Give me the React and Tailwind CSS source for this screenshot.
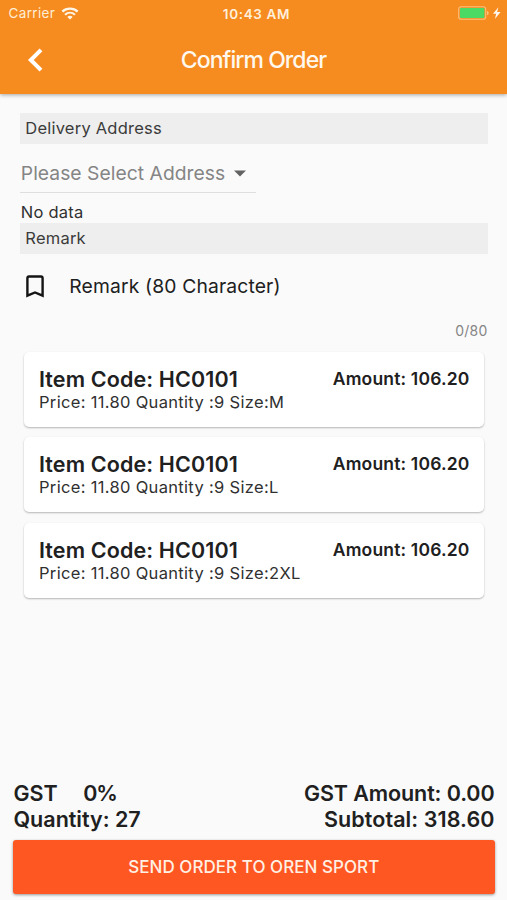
const items = [
  { code: "HC0101", price: "11.80", quantity: 9, size: "M", amount: "106.20" },
  { code: "HC0101", price: "11.80", quantity: 9, size: "L", amount: "106.20" },
  { code: "HC0101", price: "11.80", quantity: 9, size: "2XL", amount: "106.20" },
];

function StatusBar() {
  return (
    <div className="grid h-[28px] grid-cols-3 items-center text-[13.5px] leading-none">
      <div className="flex items-center pl-[8.5px] text-[#ffeed6]">
        <span className="tracking-[0.35px]">Carrier</span>
        <svg className="mb-px ml-[5.5px]" width="18" height="13" viewBox="0 0 18 13" fill="none" stroke="#fff5e6">
          <path d="M1.3 4.7C5.5.7 12.5.7 16.7 4.7" strokeWidth="2.3" />
          <path d="M4 7.7c2.9-2.6 7.1-2.6 10 0" strokeWidth="2.2" />
          <path d="M9 12.6 6.3 9.9c1.5-1.4 3.9-1.4 5.4 0z" fill="#fff5e6" stroke="none" />
        </svg>
      </div>
      <div className="pt-px pl-[6px] text-center font-semibold tracking-[0.65px] text-[#fff0dc]">10:43 AM</div>
      <div className="flex items-center justify-end pr-[6px]">
        <svg className="mb-[2px]" width="43" height="14" viewBox="0 0 43 14">
          <rect x="0.7" y="0.7" width="27" height="12.6" rx="2.6" fill="none" stroke="#fbc07c" strokeWidth="1.1" />
          <rect x="2" y="2" width="24.4" height="10" rx="1" fill="#4cd964" />
          <path d="M29 4.7c2.2.8 2.2 3.8 0 4.6z" fill="#fbc07c" />
          <path d="M40.4 1.2 35 7.8h3.2l-1.3 5.2 5.7-7h-3.5z" fill="#fff7ec" />
        </svg>
      </div>
    </div>
  );
}

function Header() {
  return (
    <header className="relative h-[94px] shrink-0 bg-[#f68b1f] shadow-[0_1px_4px_rgba(0,0,0,0.35)]">
      <StatusBar />
      <div className="grid h-[64px] grid-cols-[70px_1fr_70px] items-center">
        <button className="pl-[27px]" aria-label="Back">
          <svg width="17" height="24" viewBox="0 0 17 24" fill="none" stroke="white" strokeWidth="4">
            <path d="M14 1.8 3.8 12 14 22.2" />
          </svg>
        </button>
        <h1 className="text-center text-[23px] font-medium tracking-[-0.95px] text-[#fff8ee]">Confirm Order</h1>
      </div>
    </header>
  );
}

function SectionTitle({ children }) {
  return (
    <div className="flex h-[31px] items-center bg-[#eeeeee] pl-[5px] text-[16.5px] tracking-[0.22px] text-[#3b3b3b]">
      {children}
    </div>
  );
}

function ItemCard({ item }) {
  return (
    <div className="flex h-[75px] justify-between rounded-[5px] bg-white pt-[14px] pr-[14.5px] pl-[15px] shadow-[0_1px_2px_rgba(0,0,0,0.28)]">
      <div>
        <div className="text-[21.5px] leading-[27px] font-semibold tracking-[0.12px]">Item Code: {item.code}</div>
        <div className="text-[16.5px] leading-[19px] tracking-[0.32px] text-[#303030]">
          Price: {item.price} Quantity :{item.quantity} Size:{item.size}
        </div>
      </div>
      <div className="text-[17.5px] leading-[26px] font-semibold tracking-[0.17px]">Amount: {item.amount}</div>
    </div>
  );
}

export default function App() {
  return (
    <div className="flex h-[900px] w-[507px] flex-col overflow-hidden bg-[#fafafa] font-['Inter',sans-serif] whitespace-nowrap text-[#202020]">
      <Header />

      <main className="flex-1 pt-[19px] pr-[19.5px] pl-[20.3px]">
        <SectionTitle>Delivery Address</SectionTitle>

        {/* Address dropdown */}
        <div className="mt-[8px] flex h-[41px] w-[236px] items-center border-b border-[#dedede] pt-[3px] pl-[0.5px] text-[19.3px] tracking-[0.03px] text-[#858585]">
          <span>Please Select Address</span>
          <svg className="ml-[9px]" width="12" height="7" viewBox="0 0 12 7">
            <path d="M0 .4h12L6 6.6z" fill="#626262" />
          </svg>
        </div>

        <div className="flex h-[30px] items-end pl-[0.5px] text-[16.5px] leading-[22px] tracking-[0.22px] text-[#303030]">No data</div>
        <SectionTitle>Remark</SectionTitle>

        {/* Remark input */}
        <div className="flex h-[65px] items-center pl-[5.5px]">
          <svg width="18" height="23" viewBox="0 0 18 23" fill="none" stroke="#141414" strokeWidth="2.4">
            <path d="M1.4 20.7V3.3c0-1 .7-1.8 1.7-1.8h11.8c1 0 1.7.8 1.7 1.8v17.4L9 17.5z" />
          </svg>
          <span className="ml-[25.5px] text-[19.3px] tracking-[0.15px]">Remark (80 Character)</span>
        </div>
        <div className="flex h-[23px] items-center justify-end text-[14px] tracking-[0.2px] text-[#858585]">0/80</div>

        <div className="mr-[3.5px] ml-[3.7px] mt-[9.5px] flex flex-col gap-[10.7px]">
          {items.map((item) => (
            <ItemCard key={item.size} item={item} />
          ))}
        </div>
      </main>

      <footer className="pr-[12.5px] pb-[6px] pl-[13px]">
        <div className="flex justify-between pl-[0.5px] text-[21.5px] leading-[25.5px] font-semibold">
          <div>
            <div className="flex gap-[25.5px]">
              <span>GST</span>
              <span className="tracking-[-1.2px]">0%</span>
            </div>
            <div>Quantity: 27</div>
          </div>
          <div className="text-right">
            <div className="tracking-[-0.1px]">GST Amount: 0.00</div>
            <div className="tracking-[0.08px]">Subtotal: 318.60</div>
          </div>
        </div>
        <button className="mt-[8px] h-[54px] w-full rounded-[3px] bg-[#ff5722] pt-[2px] text-[17px] font-medium tracking-[0.05px] text-[#fff0e4] shadow-[0_1px_3px_rgba(0,0,0,0.4)]">
          SEND ORDER TO OREN SPORT
        </button>
      </footer>
    </div>
  );
}
